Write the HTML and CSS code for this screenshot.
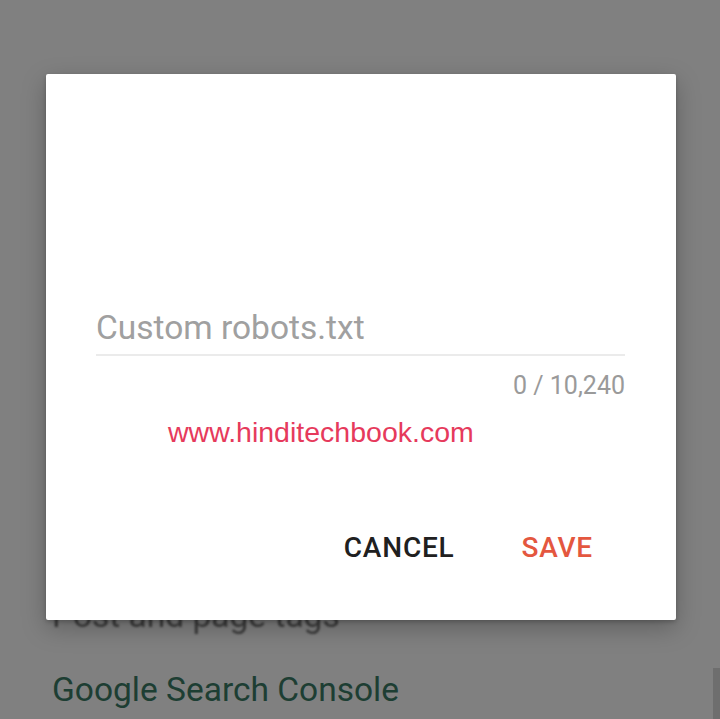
FILE: index.html
```html
<!DOCTYPE html>
<html>
<head>
<meta charset="utf-8">
<link rel="stylesheet" href="styles.css">
</head>
<body>
<div class="page">
  <div class="settings">
    <div class="row dim">Post and page tags</div>
    <div class="row link">Google Search Console</div>
  </div>
  <div class="scroll"></div>
</div>
<div class="dialog">
  <div class="field">
    <div class="input">Custom robots.txt</div>
    <div class="line"></div>
    <div class="counter">0 / 10,240</div>
  </div>
  <div class="mark">www.hinditechbook.com</div>
  <div class="actions">
    <span class="btn cancel">CANCEL</span>
    <span class="btn save">SAVE</span>
  </div>
</div>
</body>
</html>
```
FILE: styles.css
```css
html, body {
  margin: 0;
  padding: 0;
  width: 720px;
  height: 719px;
  overflow: hidden;
  background: #808080;
  font-family: Roboto, "Noto Sans", sans-serif;
}
.page {
  position: relative;
  height: 719px;
}
.settings {
  padding: 596px 0 0 52px;
  display: flex;
  flex-direction: column;
  gap: 34px;
}
.row {
  font-size: 33.5px;
  line-height: 40px;
}
.dim {
  color: #3a3a3a;
  filter: blur(1px);
}
.link {
  color: #1d3e33;
}
.scroll {
  position: absolute;
  right: 0;
  top: 668px;
  width: 7px;
  height: 51px;
  background: #6e6e6e;
}
.dialog {
  position: absolute;
  left: 46px;
  top: 74px;
  width: 630px;
  height: 546px;
  background: #fff;
  border-radius: 2px;
  box-shadow: 0 8px 24px rgba(0,0,0,0.25), 0 2px 4px rgba(0,0,0,0.2);
  box-sizing: border-box;
  padding: 233px 51px 0 50px;
  display: flex;
  flex-direction: column;
}
.field {
  display: flex;
  flex-direction: column;
}
.input {
  font-size: 33.5px;
  line-height: 42px;
  color: #a0a0a0;
}
.line {
  height: 2px;
  background: #ebebeb;
  margin-top: 5px;
}
.counter {
  align-self: flex-end;
  font-size: 25px;
  line-height: 28px;
  color: #9a9a9a;
  margin-top: 16px;
}
.mark {
  font-family: "Liberation Sans", Arial, sans-serif;
  font-size: 28.5px;
  line-height: 34px;
  color: #e63a5c;
  margin: 15px 0 0 72px;
}
.actions {
  display: flex;
  justify-content: flex-end;
  gap: 67px;
  margin-top: 83px;
  padding-right: 32px;
}
.btn {
  font-size: 28px;
  font-weight: 500;
  line-height: 32px;
  letter-spacing: 0.8px;
}
.cancel { color: #202020; }
.save { color: #e4573f; }
```
